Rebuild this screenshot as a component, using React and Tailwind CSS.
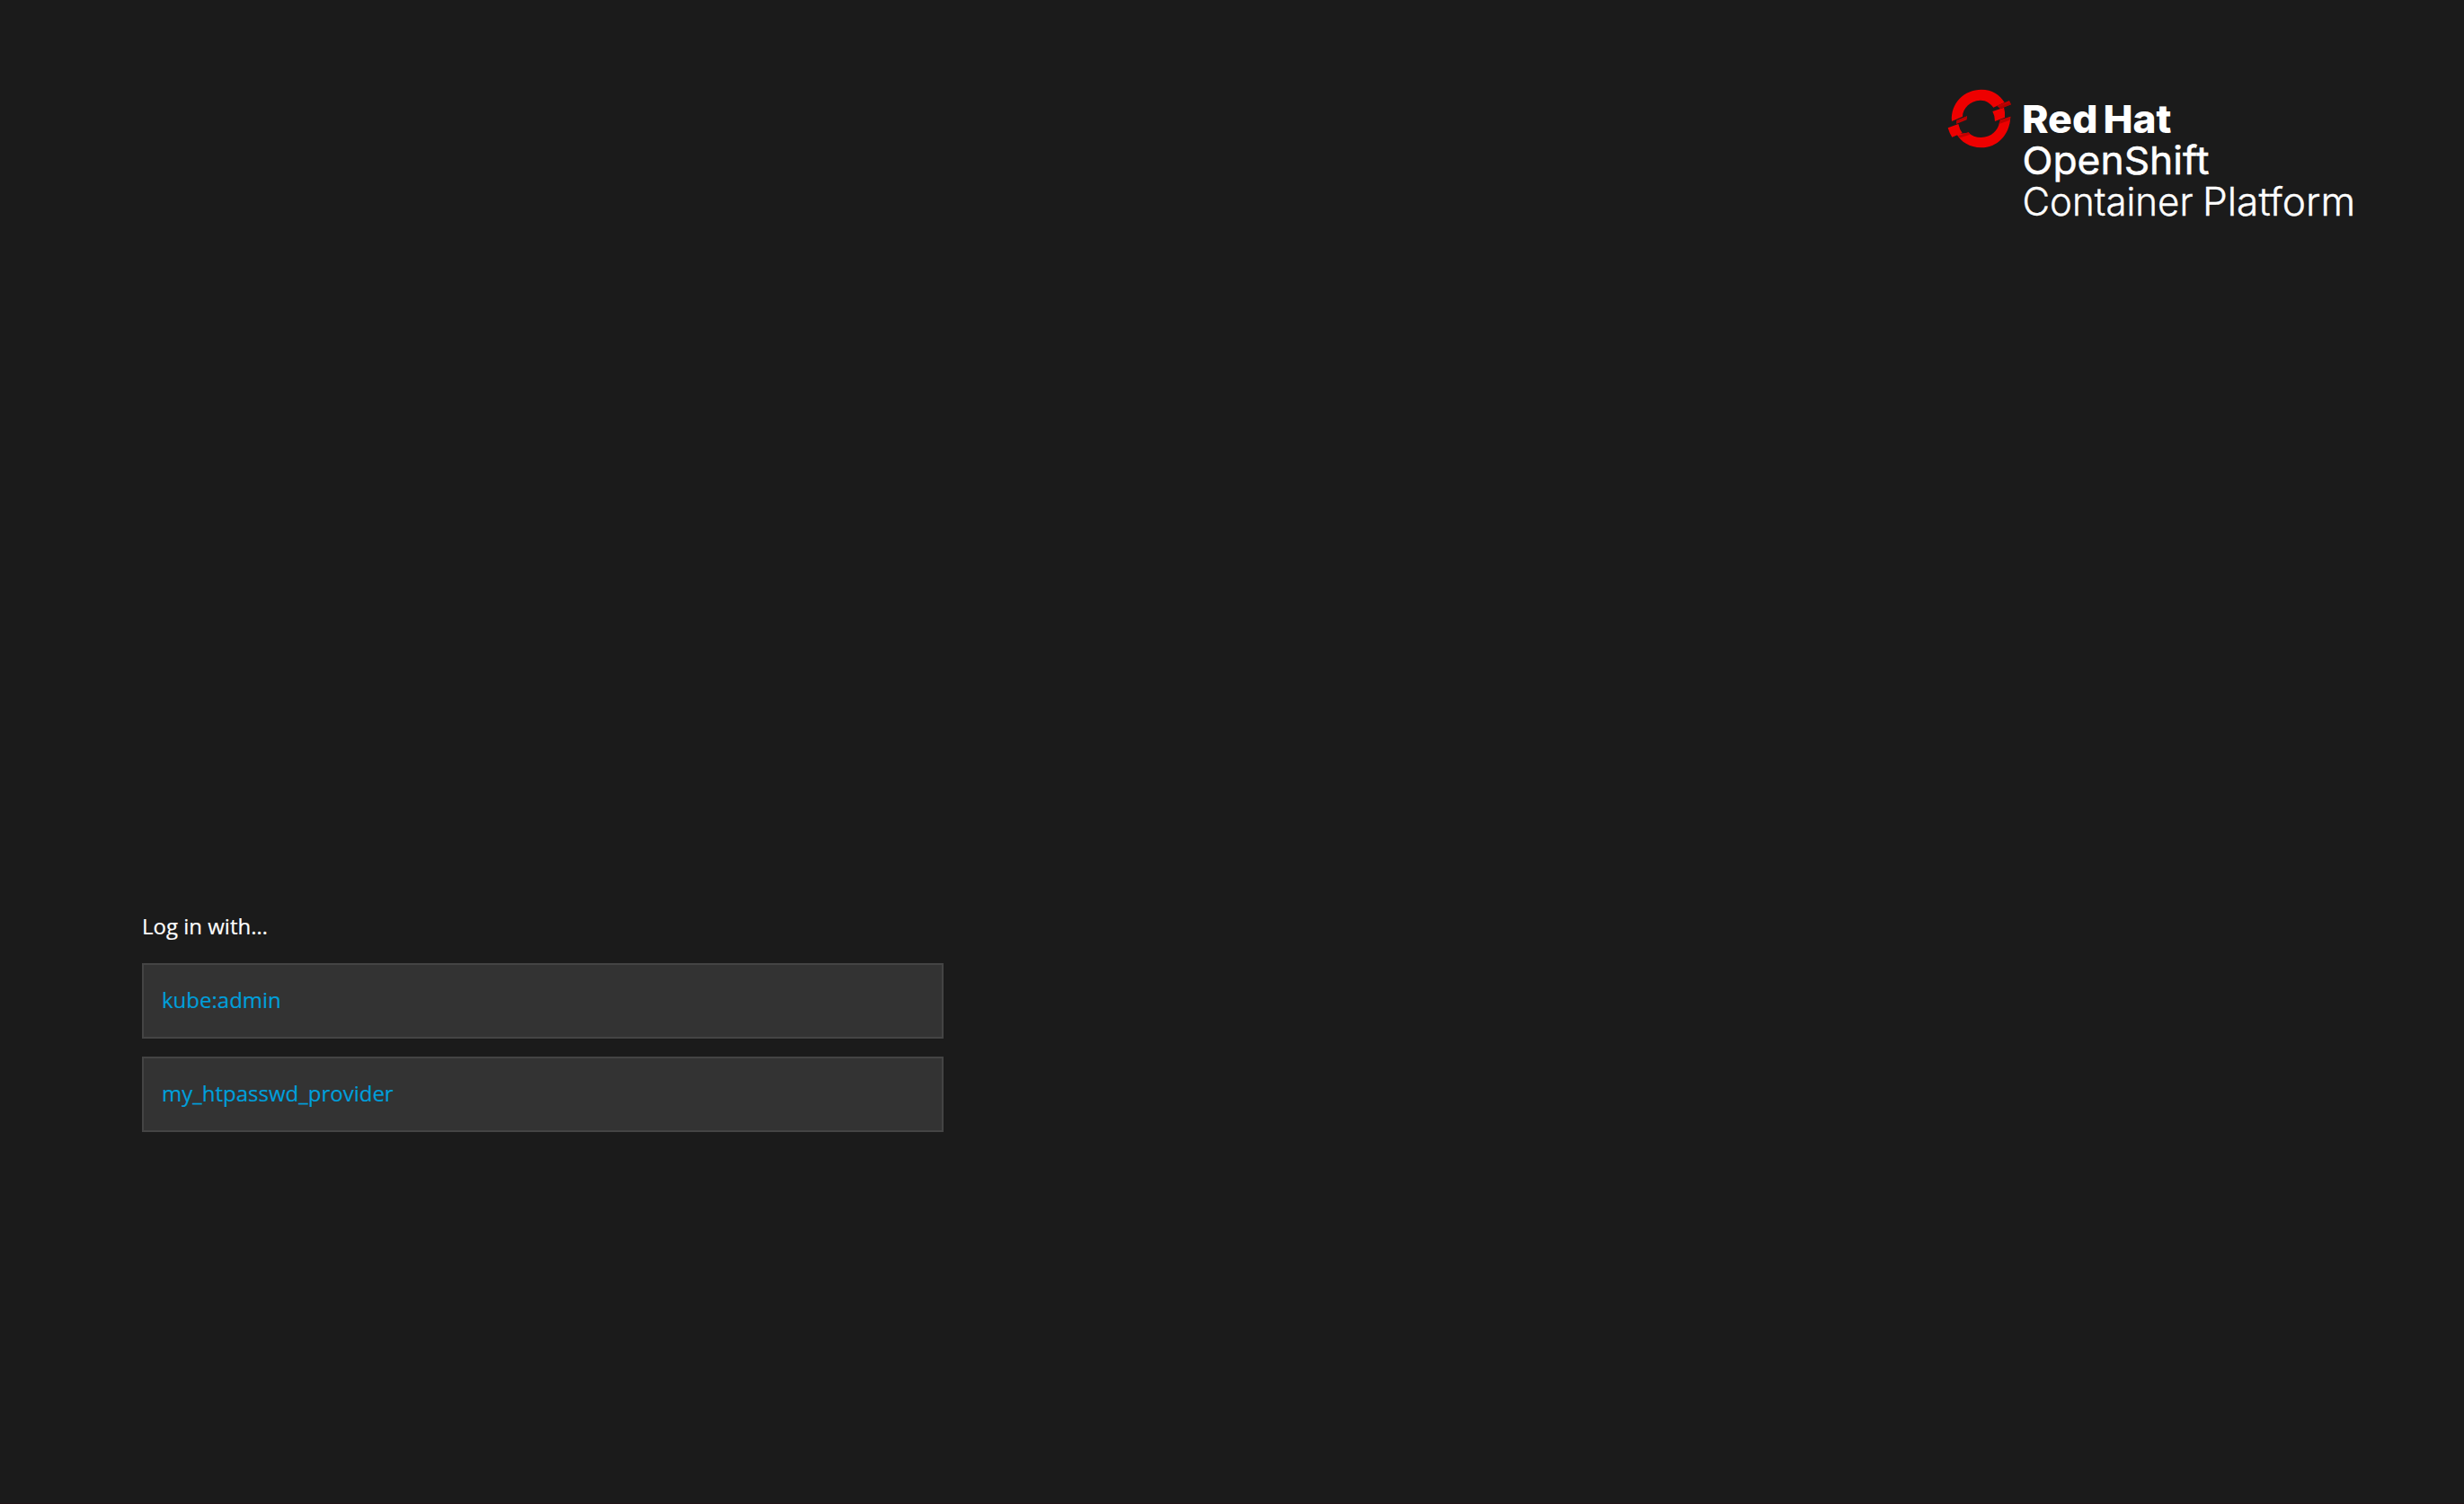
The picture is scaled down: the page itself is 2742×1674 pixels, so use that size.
const providers = ["kube:admin", "my_htpasswd_provider"];

function Logo() {
  return (
    <svg
      className="block h-[160px] w-[470px]"
      viewBox="0 0 470 160"
      role="img"
      aria-label="Red Hat OpenShift Container Platform"
    >
      <g transform="scale(.3333333)">
        <path fill="#ee0000" d="M66 135C61 74 108 29 165 29C201 29 226 46 242 72L205 89C194 74 179 64 160 65C128 66 102 92 102 119Z" />
        <path fill="#ee0000" d="M262 119C260 181 217 223 164 223C125 223 96 203 82 178L122 173C132 183 147 189 164 189C198 189 221 165 225 139Z" />
        <path fill="#ee0000" d="M202 102L240 89Q245 106 243 122L210 135Q210 116 202 102ZM53 157L88 144Q92 162 101 174L67 188Q58 175 53 157Z" />
        <path fill="#c00000" d="M216 83L258 66L264 79L228 93ZM82 132L117 118L116 130L81 144ZM227 130L262 119L260 131L224 144ZM87 184L122 171L128 179L94 190Z" />
        <path fill="#b00000" d="M224 88L258 73L264 79L228 93ZM82 132L117 118L117 123L82 138Z" />
      </g>
      <g fill="#ffffff" stroke="#ffffff" strokeWidth="0" fontFamily="Inter, sans-serif" fontSize="43">
        <text x="100" y="58" fontWeight="800" textLength="84.5" lengthAdjust="spacingAndGlyphs">Red</text>
        <text x="190.5" y="58" fontWeight="800" textLength="76" lengthAdjust="spacingAndGlyphs">Hat</text>
        <text x="100.5" y="103.6" fontWeight="400" strokeWidth="0.5" textLength="208" lengthAdjust="spacingAndGlyphs">OpenShift</text>
        <text x="100.5" y="149.5" fontWeight="300" strokeWidth="0.4" textLength="190" lengthAdjust="spacingAndGlyphs">Container</text>
        <text x="301" y="149.5" fontWeight="300" strokeWidth="0.4" textLength="170" lengthAdjust="spacingAndGlyphs">Platform</text>
      </g>
    </svg>
  );
}

export default function App() {
  return (
    <div className="flex h-[1674px] w-[2742px] flex-col overflow-hidden border-b border-[#201317] bg-[#1b1b1b] font-['Open_Sans',sans-serif] text-2xl">
      <header className="flex justify-end pt-[90px] pr-[122px]">
        <Logo />
      </header>
      <main className="mt-[763px] ml-[158px] w-[892px] [-webkit-text-stroke:0.2px_currentColor]">
        <h1 className="leading-9 text-white">Log in with…</h1>
        <ul className="mt-[23px] flex flex-col gap-5">
          {providers.map((name) => (
            <li key={name}>
              <a
                href="#"
                className="flex h-[84px] items-center border-2 border-[#444444] bg-[#333333] px-5 pb-0.5 leading-9 text-[#009fdb]"
              >
                {name}
              </a>
            </li>
          ))}
        </ul>
      </main>
    </div>
  );
}
